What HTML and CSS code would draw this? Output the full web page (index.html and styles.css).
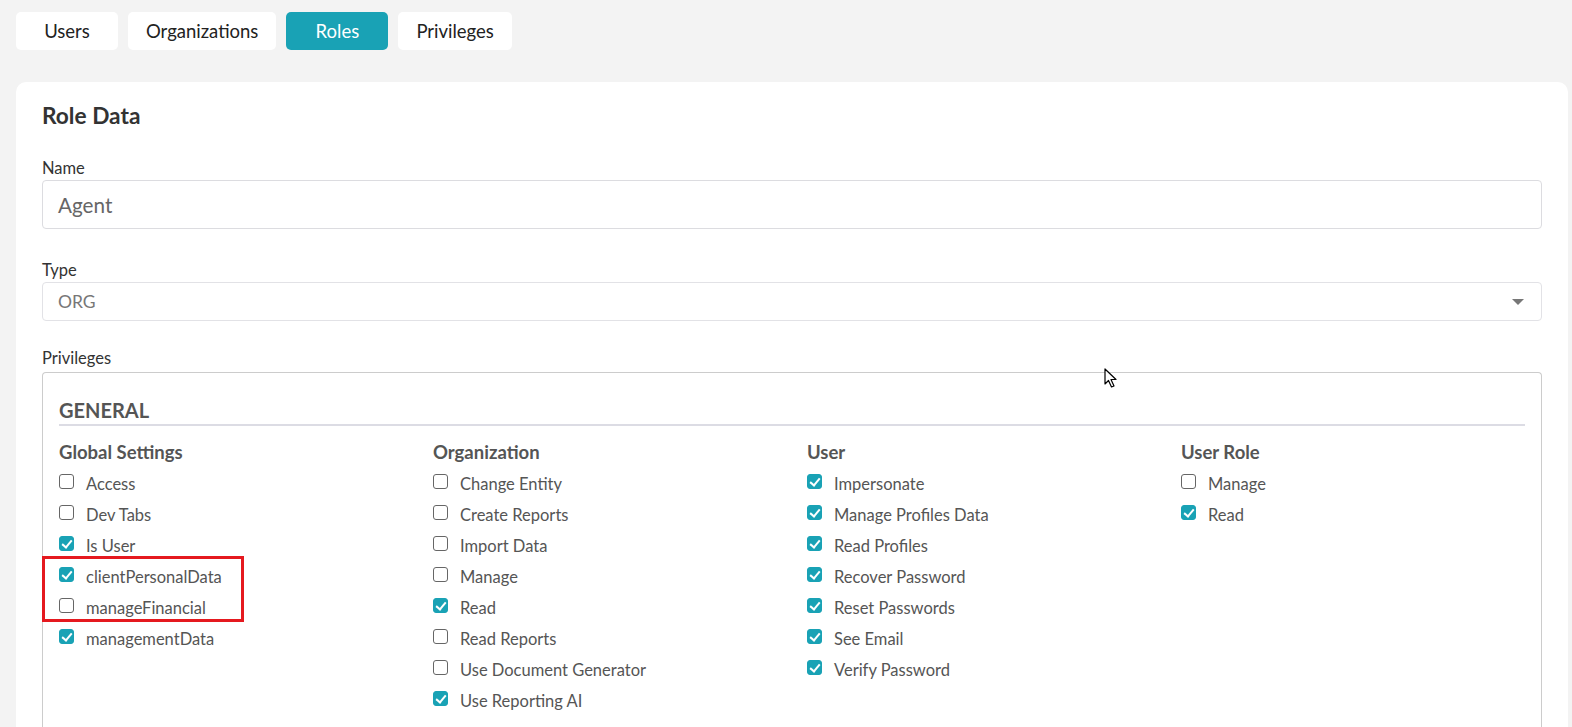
FILE: index.html
```html
<!DOCTYPE html>
<html>
<head>
<meta charset="utf-8">
<link rel="stylesheet" href="styles.css">
</head>
<body>
<div class="page">
  <nav class="tabs">
    <button class="tab wide">Users</button>
    <button class="tab">Organizations</button>
    <button class="tab wide active">Roles</button>
    <button class="tab">Privileges</button>
  </nav>
  <section class="card">
    <h2 class="title">Role Data</h2>
    <div class="field f-name">
      <label class="label">Name</label>
      <div class="input">Agent</div>
    </div>
    <div class="field f-type">
      <label class="label">Type</label>
      <div class="select"><span>ORG</span><span class="caret"></span></div>
    </div>
    <div class="field f-priv">
      <label class="label">Privileges</label>
      <div class="priv-box">
        <h3 class="group-title">GENERAL</h3>
        <div class="cols">
          <div class="col">
            <h4 class="col-title">Global Settings</h4>
            <div class="item"><span class="cb"></span>Access</div>
            <div class="item"><span class="cb"></span>Dev Tabs</div>
            <div class="item"><span class="cb on"></span>Is User</div>
            <div class="item"><span class="cb on"></span>clientPersonalData</div>
            <div class="item"><span class="cb"></span>manageFinancial</div>
            <div class="item"><span class="cb on"></span>managementData</div>
            <div class="highlight"></div>
          </div>
          <div class="col">
            <h4 class="col-title">Organization</h4>
            <div class="item"><span class="cb"></span>Change Entity</div>
            <div class="item"><span class="cb"></span>Create Reports</div>
            <div class="item"><span class="cb"></span>Import Data</div>
            <div class="item"><span class="cb"></span>Manage</div>
            <div class="item"><span class="cb on"></span>Read</div>
            <div class="item"><span class="cb"></span>Read Reports</div>
            <div class="item"><span class="cb"></span>Use Document Generator</div>
            <div class="item"><span class="cb on"></span>Use Reporting AI</div>
          </div>
          <div class="col">
            <h4 class="col-title">User</h4>
            <div class="item"><span class="cb on"></span>Impersonate</div>
            <div class="item"><span class="cb on"></span>Manage Profiles Data</div>
            <div class="item"><span class="cb on"></span>Read Profiles</div>
            <div class="item"><span class="cb on"></span>Recover Password</div>
            <div class="item"><span class="cb on"></span>Reset Passwords</div>
            <div class="item"><span class="cb on"></span>See Email</div>
            <div class="item"><span class="cb on"></span>Verify Password</div>
          </div>
          <div class="col">
            <h4 class="col-title">User Role</h4>
            <div class="item"><span class="cb"></span>Manage</div>
            <div class="item"><span class="cb on"></span>Read</div>
          </div>
        </div>
        <svg class="cursor" width="14" height="21" viewBox="0 0 14 21"><path d="M1 1 L1 16 L4.5 12.5 L7.5 19 L10 18 L7 11.5 L12 11.5 Z" fill="#fff" stroke="#000" stroke-width="1.2" stroke-linejoin="round"/></svg>
      </div>
    </div>
  </section>
</div>
</body>
</html>
```
FILE: styles.css
```css
* { box-sizing: border-box; }
html, body { margin: 0; padding: 0; }
body {
  background: #f3f3f3;
  font-family: Lato, "Open Sans", sans-serif;
  color: #555;
  height: 727px;
  overflow: hidden;
}
.page { padding: 12px 4px 0 16px; }
.tabs { display: flex; gap: 10px; }
.tab {
  font-family: inherit;
  font-size: 18.5px;
  color: #222;
  background: #fff;
  border: none;
  border-radius: 5px;
  height: 38px;
  padding: 0 18px;
  cursor: pointer;
}
.tab.wide { min-width: 102px; }
.tab.active { background: #19a2b5; color: #fff; }
.card {
  margin-top: 32px;
  background: #fff;
  border-radius: 10px;
  padding: 20px 26px 0 26px;
  height: 700px;
}
.title {
  margin: 0 0 28px 0;
  font-size: 22.7px;
  font-weight: 700;
  color: #333;
  line-height: 28px;
}
.label {
  display: block;
  font-size: 16.5px;
  color: #333;
  line-height: 20px;
  margin-bottom: 2px;
}
.f-name { margin-bottom: 31px; }
.f-type { margin-bottom: 27px; }
.f-priv .label { margin-bottom: 4px; }
.input {
  height: 49px;
  border: 1px solid #dcdce0;
  border-radius: 4px;
  padding: 0 15px;
  display: flex;
  align-items: center;
  font-size: 20.7px;
  color: #666;
}
.select {
  height: 39px;
  border: 1px solid #e2e2e6;
  border-radius: 4px;
  padding: 0 17px 0 15px;
  display: flex;
  align-items: center;
  justify-content: space-between;
  font-size: 17.5px;
  color: #777;
}
.caret {
  width: 0; height: 0;
  border-left: 6px solid transparent;
  border-right: 6px solid transparent;
  border-top: 6px solid #777;
}
.priv-box {
  position: relative;
  border: 1px solid #ccc;
  border-bottom: none;
  border-radius: 4px 4px 0 0;
  padding: 24px 16px 0 16px;
  height: 400px;
}
.group-title {
  margin: 0;
  font-size: 20px;
  font-weight: 700;
  color: #555;
  line-height: 27px;
  border-bottom: 2px solid #dcdce4;
}
.cols {
  display: grid;
  grid-template-columns: repeat(4, 342px);
  column-gap: 32px;
  margin-top: 14px;
}
.col { position: relative; }
.col-title {
  margin: 0 0 4px 0;
  font-size: 18.5px;
  font-weight: 700;
  color: #555;
  line-height: 24px;
}
.item {
  display: flex;
  align-items: center;
  height: 31px;
  font-size: 16.5px;
  color: #555;
}
.cb {
  width: 15px; height: 15px;
  border: 1.5px solid #666;
  border-radius: 3px;
  margin-right: 12px;
  margin-top: -4px;
  flex: none;
  position: relative;
}
.cb.on { background: #19a2b5; border-color: #19a2b5; }
.cb.on::after {
  content: "";
  position: absolute;
  left: 3.5px; top: 0.5px;
  width: 4px; height: 8px;
  border-right: 2.5px solid #fff;
  border-bottom: 2.5px solid #fff;
  transform: rotate(40deg);
}
.highlight {
  position: absolute;
  left: -17px;
  top: 116px;
  width: 202px;
  height: 66px;
  border: 3px solid #e5191f;
  pointer-events: none;
}
.cursor {
  position: absolute;
  left: 1061px;
  top: -5px;
}
```
